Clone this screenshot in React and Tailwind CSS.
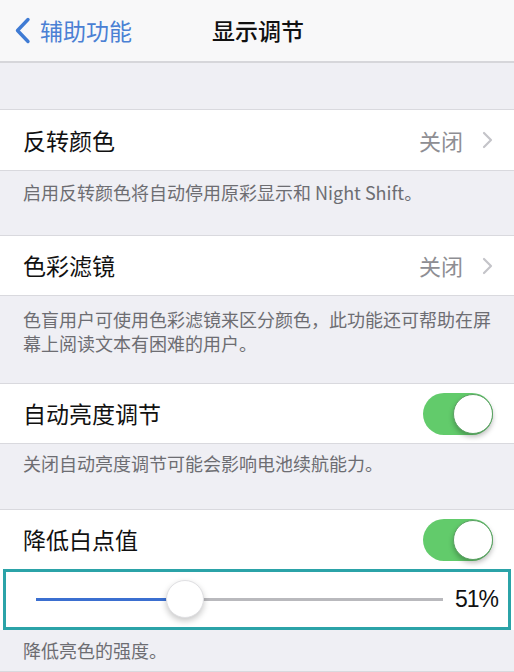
import React, { useState } from 'react';

const font = { fontFamily: '"Noto Sans CJK SC", "Noto Sans", sans-serif' };

function Chevron() {
  return (
    <svg width="11" height="18" viewBox="0 0 11 18" className="ml-[19px]">
      <path d="M2 2 L9 9 L2 16" fill="none" stroke="#c4c4c9" strokeWidth="2.2" strokeLinecap="round" strokeLinejoin="round" />
    </svg>
  );
}

function Toggle({ on }) {
  return (
    <div className={`w-[70px] h-[42px] rounded-full flex items-center ${on ? 'bg-[#62cb6b] justify-end' : 'bg-[#e5e5ea] justify-start'}`}>
      <div className="w-[40px] h-[40px] rounded-full bg-white border border-[#5aa062] shadow-[0_3px_5px_rgba(0,0,0,0.25)]" />
    </div>
  );
}

function Row({ title, h, children }) {
  return (
    <div className={`bg-white flex items-center justify-between pl-[23px] pr-[21px] border-b border-[#d9d9de] ${h}`}>
      <span className="text-[23px] text-[#111]">{title}</span>
      {children}
    </div>
  );
}

function Footer({ h, pt, children }) {
  return (
    <div className={`pl-[23px] pr-[18px] text-[18px] leading-[24px] text-[#6d6d72] border-b border-[#d9d9de] ${h} ${pt}`}>
      {children}
    </div>
  );
}

export default function App() {
  const [whitePoint] = useState(51);
  // track is 407px wide, thumb centre sits at value * 2.92px
  const pos = whitePoint * 2.92;

  return (
    <div className="w-[514px] h-[672px] overflow-hidden bg-[#efeff4]" style={font}>
      {/* nav bar */}
      <div className="h-[63px] bg-[#f8f8f9] border-b-2 border-[#d6d6da] flex items-center">
        <div className="flex items-center pl-[14px] text-[#4a80d4]">
          <svg width="17" height="27" viewBox="0 0 17 27">
            <path d="M14 2.5 L3.5 13.5 L14 24.5" fill="none" stroke="#3f7bd4" strokeWidth="3.4" strokeLinecap="round" strokeLinejoin="round" />
          </svg>
          <span className="ml-[9px] text-[23px]">辅助功能</span>
        </div>
        <span className="ml-[80px] text-[23px] font-medium text-[#111]">显示调节</span>
      </div>

      <div className="h-[47px] border-b border-[#d9d9de]" />

      <Row title="反转颜色" h="h-[61px]">
        <div className="flex items-center">
          <span className="text-[22px] text-[#8e8e93]">关闭</span>
          <Chevron />
        </div>
      </Row>
      <Footer h="h-[65px]" pt="pt-[9px]">启用反转颜色将自动停用原彩显示和 Night Shift。</Footer>

      <Row title="色彩滤镜" h="h-[60px]">
        <div className="flex items-center">
          <span className="text-[22px] text-[#8e8e93]">关闭</span>
          <Chevron />
        </div>
      </Row>
      <Footer h="h-[88px]" pt="pt-[11px]">色盲用户可使用色彩滤镜来区分颜色，此功能还可帮助在屏幕上阅读文本有困难的用户。</Footer>

      <Row title="自动亮度调节" h="h-[60px]">
        <Toggle on />
      </Row>
      <Footer h="h-[66px]" pt="pt-[7px]">关闭自动亮度调节可能会影响电池续航能力。</Footer>

      <div className="bg-white flex items-center justify-between pl-[23px] pr-[21px] h-[59px]">
        <span className="text-[23px] text-[#111]">降低白点值</span>
        <Toggle on />
      </div>

      {/* white point slider */}
      <div className="bg-white px-[3px]">
        <div className="h-[61px] border-[3px] border-[#2ba3a8] flex items-center pl-[30px] pr-[10px]">
          <div className="relative w-[407px] h-[3px] bg-[#b9b9bd]">
            <div className="absolute left-0 top-0 h-[3px] bg-[#3b6fd0]" style={{ width: `${pos}px` }} />
            <div
              className="absolute top-[-18px] w-[38px] h-[38px] rounded-full bg-white border border-[#e0e0e3] shadow-[0_3px_6px_rgba(0,0,0,0.22)]"
              style={{ left: `${pos - 19}px` }}
            />
          </div>
          <span className="ml-auto text-[23px] text-[#111] tracking-[-1px]" style={{ fontFamily: '"Liberation Sans", sans-serif' }}>{whitePoint}%</span>
        </div>
      </div>
      <Footer h="h-[42px]" pt="pt-[8px]">降低亮色的强度。</Footer>
    </div>
  );
}
